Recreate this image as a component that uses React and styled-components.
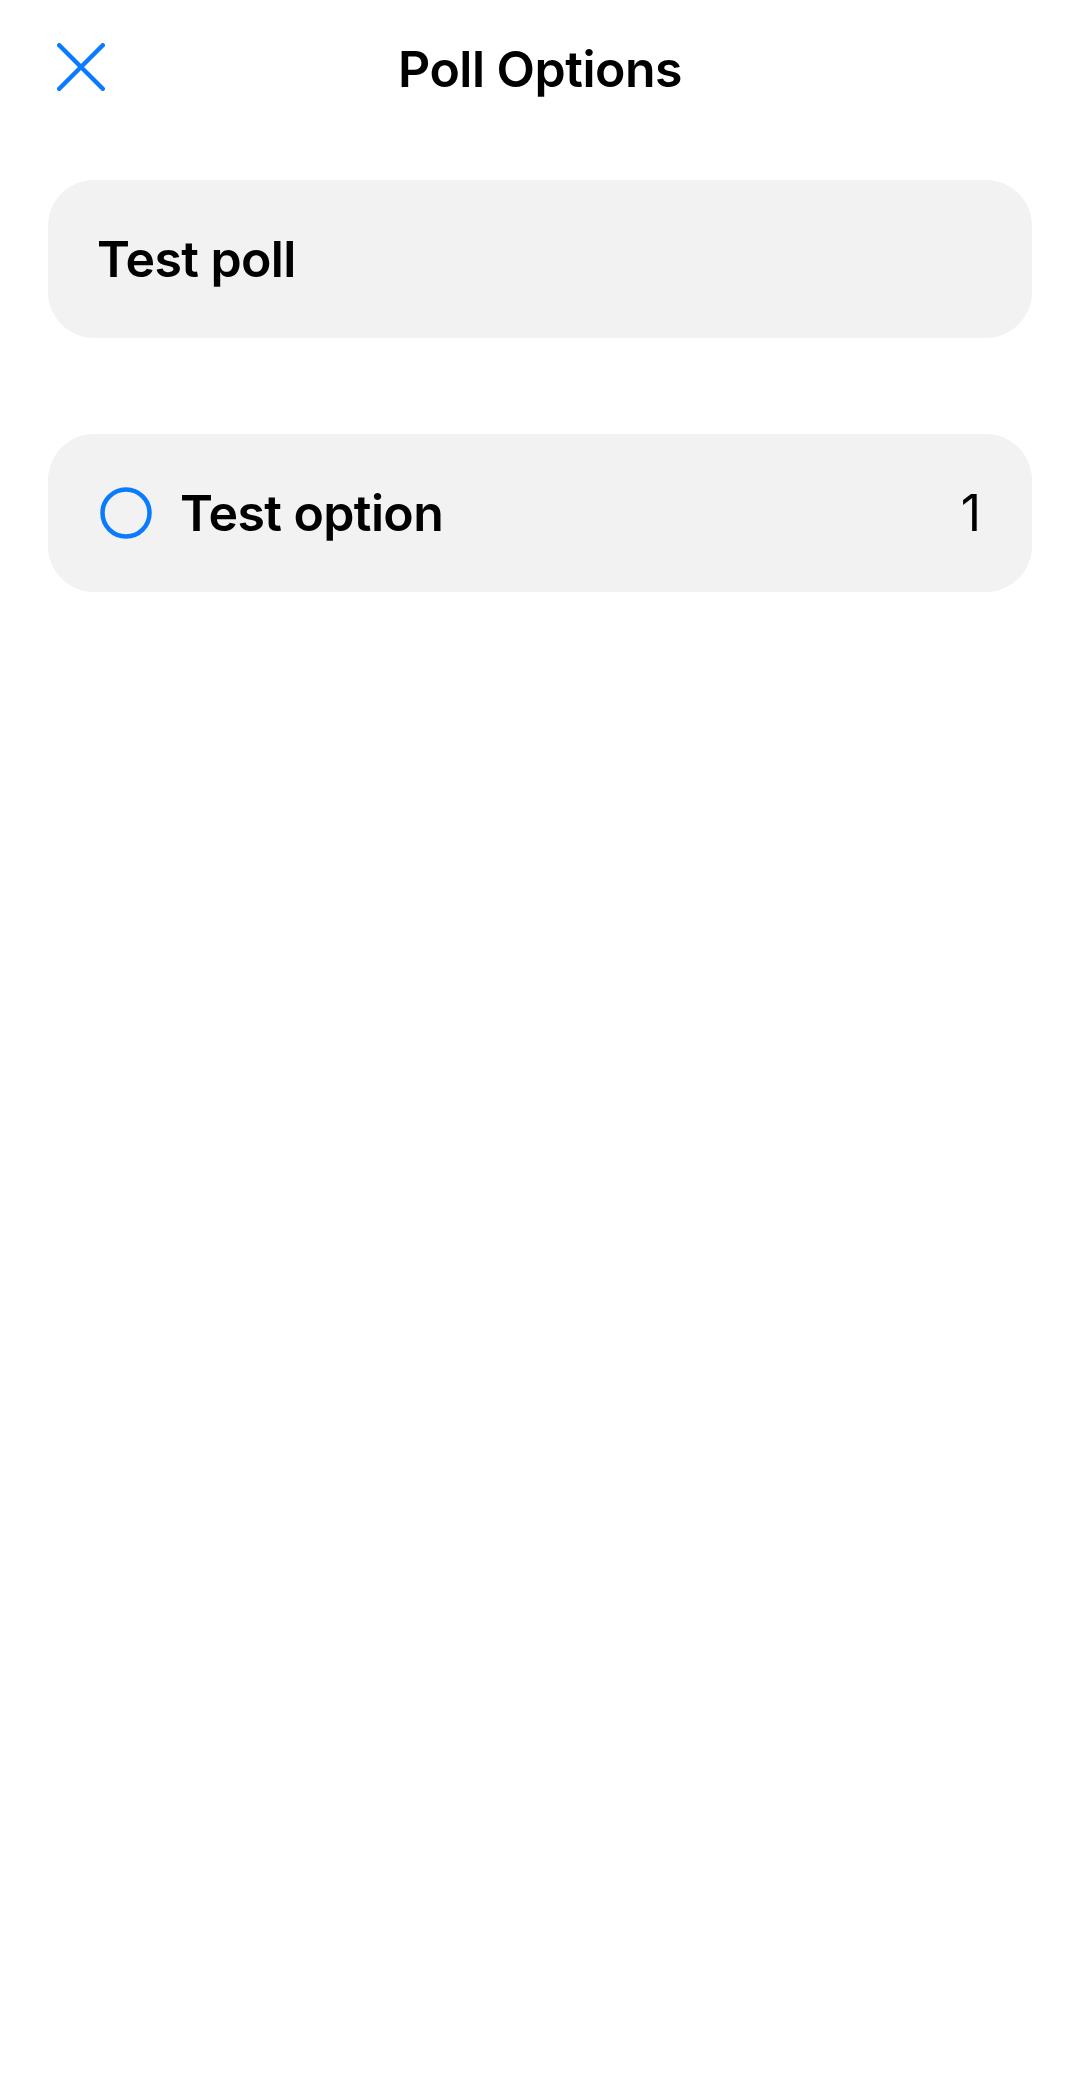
import React from 'react';
import styled, { createGlobalStyle } from 'styled-components';

const GlobalStyle = createGlobalStyle`
  html, body {
    margin: 0;
    padding: 0;
    background: #ffffff;
  }
  body {
    font-family: Inter, "Noto Sans", "Liberation Sans", sans-serif;
    color: #000000;
    -webkit-font-smoothing: antialiased;
  }
`;

const Screen = styled.div`
  width: 1080px;
  min-height: 2100px;
  background: #ffffff;
`;

const Header = styled.header`
  display: grid;
  grid-template-columns: 1fr auto 1fr;
  align-items: center;
  height: 134px;
  padding: 0 57px;
`;

const CloseButton = styled.button`
  display: flex;
  align-items: center;
  justify-content: flex-start;
  padding: 0;
  border: none;
  background: none;
  width: 48px;
  height: 48px;
  cursor: pointer;
`;

const Title = styled.h1`
  margin: 0;
  font-size: 50px;
  font-weight: 600;
  line-height: 1;
  letter-spacing: -0.5px;
  transform: translateY(2px);
`;

const List = styled.main`
  display: flex;
  flex-direction: column;
  gap: 96px;
  padding: 46px 48px 0;
`;

const Card = styled.div`
  display: flex;
  align-items: center;
  gap: 28px;
  height: 158px;
  padding: 0 51px 0 49px;
  border-radius: 46px;
  background: #f2f2f2;
`;

const Radio = styled.span`
  display: flex;
  margin-left: 3px;
`;

const Label = styled.span`
  flex: 1;
  font-size: 50px;
  font-weight: 600;
  line-height: 1;
  letter-spacing: -0.6px;
`;

const Count = styled.span`
  font-size: 50px;
  font-weight: 400;
  line-height: 1;
`;

const CloseIcon = () => (
  <svg width="48" height="48" viewBox="0 0 48 48" fill="none">
    <path
      d="M2.25 2.25 L45.75 45.75 M45.75 2.25 L2.25 45.75"
      stroke="#0a7aff"
      strokeWidth="4.5"
      strokeLinecap="round"
    />
  </svg>
);

const RadioIcon = () => (
  <Radio>
    <svg width="52" height="52" viewBox="0 0 52 52" fill="none">
      <circle cx="26" cy="26" r="23.5" stroke="#0a7aff" strokeWidth="4.5" />
    </svg>
  </Radio>
);

const options = [{ id: 1, text: 'Test option', votes: 1 }];

export default function App() {
  return (
    <Screen>
      <GlobalStyle />
      <Header>
        <CloseButton aria-label="Close">
          <CloseIcon />
        </CloseButton>
        <Title>Poll Options</Title>
        <span />
      </Header>
      <List>
        <Card>
          <Label>Test poll</Label>
        </Card>
        {options.map((o) => (
          <Card key={o.id}>
            <RadioIcon />
            <Label>{o.text}</Label>
            <Count>{o.votes}</Count>
          </Card>
        ))}
      </List>
    </Screen>
  );
}
